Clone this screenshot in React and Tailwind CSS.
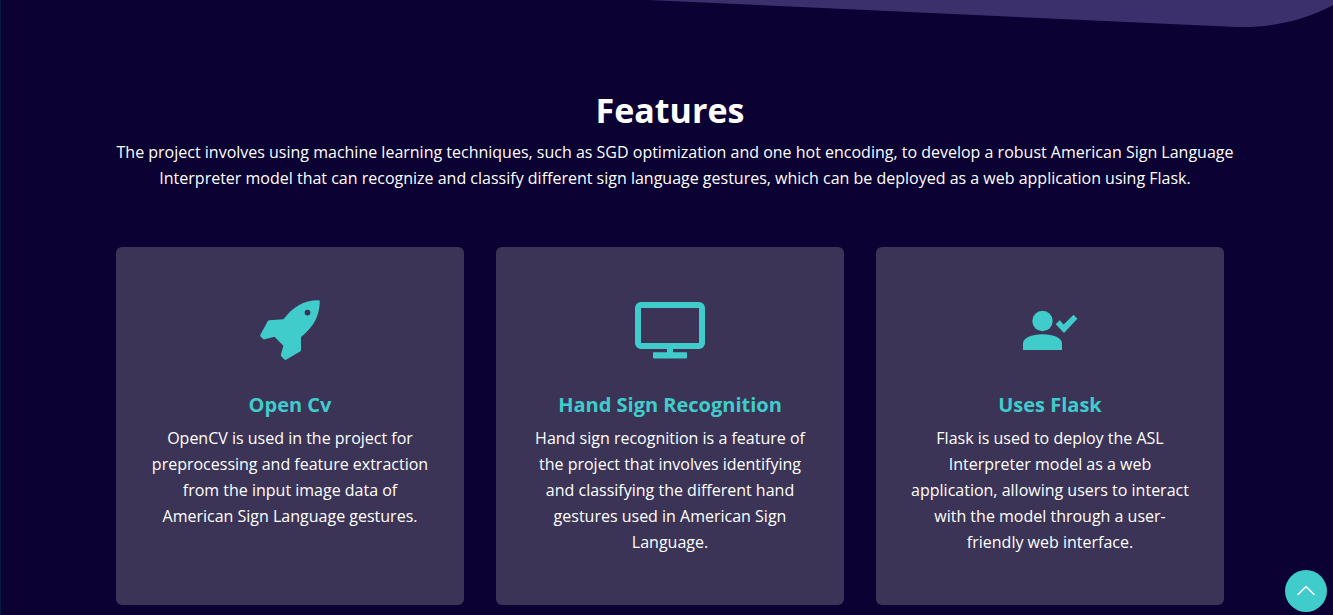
import React from "react";

function RocketIcon() {
  return (
    <svg className="size-20" viewBox="0 0 80 80" fill="currentColor" aria-hidden="true">
      <path
        fillRule="evenodd"
        d="M68.500 10.300Q69.800 10.300 69.800 11.500C69.400 25.500 64.500 36 51 47V60Q51 61 50.100 61.500L36.500 69.600Q35.300 70.300 34.200 69.300L31.400 66.500Q30.700 65.700 30.900 64.700L33.400 55.700 24.500 46.800 14.800 49.300Q13.600 49.600 12.800 48.800L10.700 46.700Q9.800 45.700 10.500 44.500L17.700 31.300Q18.300 30.200 19.500 30.200L33.500 29.300C43 17 53 10.500 68.500 10.300ZM57.500 19.700A2.900 2.900 0 1 0 57.500 25.500 2.900 2.900 0 1 0 57.500 19.700Z"
      />
    </svg>
  );
}

function MonitorIcon() {
  return (
    <svg className="size-20" viewBox="0 0 80 80" fill="currentColor" aria-hidden="true">
      <path
        fillRule="evenodd"
        d="M11 12H69A6 6 0 0 1 75 18V53A6 6 0 0 1 69 59H43V62.300H56A1 1 0 0 1 57 63.500V67.500A1 1 0 0 1 56 68.500H24A1 1 0 0 1 23 67.500V63.500A1 1 0 0 1 24 62.300H37V59H11A6 6 0 0 1 5 53V18A6 6 0 0 1 11 12ZM11 18V53H69V18Z"
      />
    </svg>
  );
}

function PersonCheckIcon() {
  return (
    <svg className="size-20" viewBox="0 0 80 80" fill="currentColor" aria-hidden="true">
      <circle cx="32.500" cy="31" r="10.200" />
      <path d="M13 60V53.500C13 48 21.500 44.200 32.500 44.200S52 48 52 53.500V60Z" />
      <path d="M45.700 34.300 49.700 30.300 53.700 34.500 63.500 24.700 67.400 28.700 54 43Z" />
    </svg>
  );
}

const features = [
  {
    title: "Open Cv",
    Icon: RocketIcon,
    text: "OpenCV is used in the project for preprocessing and feature extraction from the input image data of American Sign Language gestures.",
  },
  {
    title: "Hand Sign Recognition",
    Icon: MonitorIcon,
    text: "Hand sign recognition is a feature of the project that involves identifying and classifying the different hand gestures used in American Sign Language.",
  },
  {
    title: "Uses Flask",
    Icon: PersonCheckIcon,
    text: "Flask is used to deploy the ASL Interpreter model as a web application, allowing users to interact with the model through a user-friendly web interface.",
  },
];

function FeatureCard({ title, text, Icon }) {
  return (
    <article className="flex flex-col items-center rounded-md bg-[#3b3457] px-[30px] pt-[43px] pb-[50px] text-center">
      <span className="mb-[23px] text-[#40cccb]">
        <Icon />
      </span>
      <h3 className="mb-2 text-[20px] leading-6 font-bold text-[#40cccb]">{title}</h3>
      <p>{text}</p>
    </article>
  );
}

export default function App() {
  return (
    <main className="relative min-h-screen border-l border-[#0a1c3d] bg-[#0b0133] pt-[90px] pr-0 pb-[10px] pl-[6px] font-['Open_Sans',sans-serif] text-[16px] leading-[26px] text-white">
      <svg
        className="absolute top-0 right-0"
        width="713"
        height="28"
        viewBox="620 0 713 28"
        fill="#3b2f6c"
        aria-hidden="true"
      >
        <path d="M648 0 1236 27C1275 28 1308 19 1333 5V0Z" />
      </svg>
      <section className="mx-auto max-w-[1140px]">
        <h2 className="text-center text-[34px] leading-[41px] font-bold">Features</h2>
        <p className="mt-2 mb-14 pl-[10px] text-center">
          The project involves using machine learning techniques, such as SGD optimization and one
          hot encoding, to develop a robust American Sign Language Interpreter model that can
          recognize and classify different sign language gestures, which can be deployed as a web
          application using Flask.
        </p>
        <div className="grid gap-8 px-4 md:grid-cols-3">
          {features.map((feature) => (
            <FeatureCard key={feature.title} {...feature} />
          ))}
        </div>
      </section>
      <button
        type="button"
        aria-label="Back to top"
        className="fixed right-[6px] bottom-[3px] flex size-[42px] items-center justify-center rounded-full bg-[#40cccb]"
      >
        <svg
          className="size-6"
          viewBox="0 0 24 24"
          fill="none"
          stroke="white"
          strokeWidth="1.600"
          strokeLinecap="round"
          strokeLinejoin="round"
          aria-hidden="true"
        >
          <path d="M4 15.500 12 7.500 20 15.500" />
        </svg>
      </button>
    </main>
  );
}
